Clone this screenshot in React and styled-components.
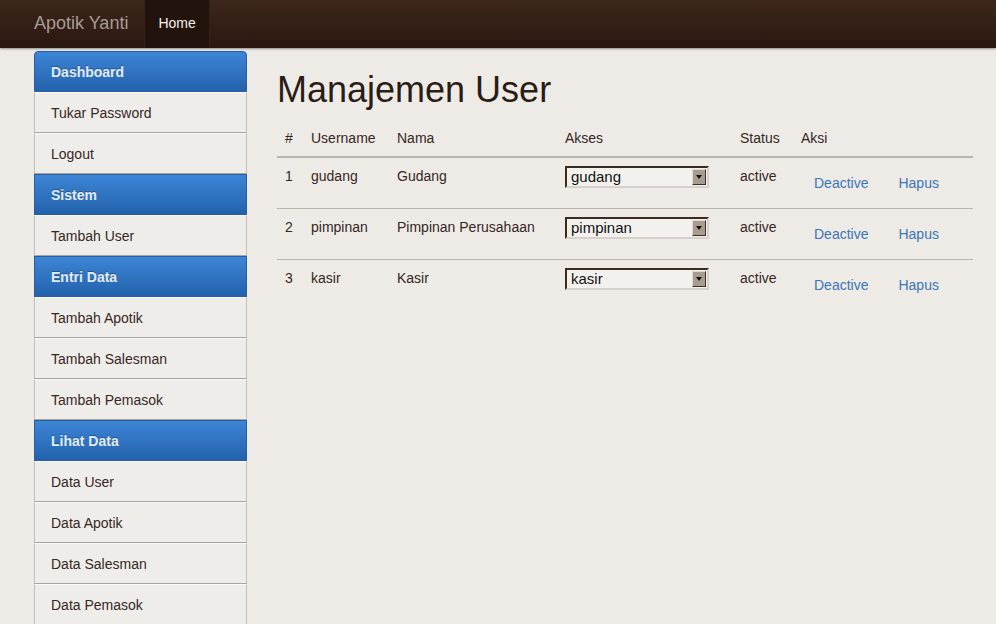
import React from "react";
import styled, { createGlobalStyle } from "styled-components";

const GlobalStyle = createGlobalStyle`
  body {
    margin: 0;
    background: #eeebe7;
    font-family: "Liberation Sans", Arial, sans-serif;
    font-size: 14px;
    color: #34271f;
  }
`;

const Navbar = styled.div`
  height: 48px;
  display: flex;
  align-items: stretch;
  padding-left: 34px;
  background: linear-gradient(#3d271c, #2a170f);
  box-shadow: 0 1px 2px rgba(0, 0, 0, 0.4);
`;

const Brand = styled.div`
  display: flex;
  align-items: center;
  font-size: 18px;
  color: #a69c94;
  margin-right: 16px;
  padding-bottom: 1px;
`;

const NavLink = styled.div`
  display: flex;
  align-items: center;
  padding: 0 14px 2px;
  color: #f4efea;
  font-size: 14px;
  background: #22140d;
  box-shadow: inset 1px 0 0 #33211a, inset -1px 0 0 #33211a;
`;

const Layout = styled.div`
  display: flex;
  padding-left: 34px;
`;

const Sidebar = styled.div`
  width: 213px;
  margin-top: 3px;
  display: flex;
  flex-direction: column;
`;

const NavHeader = styled.div`
  height: 41px;
  box-sizing: border-box;
  padding-left: 16px;
  display: flex;
  align-items: center;
  font-weight: bold;
  color: #e3edf8;
  text-shadow: 0 -1px 0 rgba(0, 0, 0, 0.3);
  background: linear-gradient(#3d85d6, #2362ac);
  border: 1px solid #2a5e9f;
  border-radius: ${(p) => (p.$first ? "4px 4px 0 0" : "0")};
`;

const NavItem = styled.div`
  height: 41px;
  box-sizing: border-box;
  padding-left: 16px;
  display: flex;
  align-items: center;
  color: #36281f;
  background: #efedea;
  border: 1px solid #c3beb9;
  border-top: 1px solid #f9f8f6;
  border-bottom: 1px solid #a9a39e;
`;

const Main = styled.div`
  margin-left: 30px;
  width: 696px;
`;

const Title = styled.h1`
  margin: 22px 0 10px;
  font-size: 36px;
  line-height: 40px;
  font-weight: normal;
  color: #2a1d15;
`;

const Table = styled.table`
  width: 100%;
  border-collapse: collapse;
  table-layout: fixed;
`;

const Th = styled.th`
  text-align: left;
  font-weight: normal;
  padding: 8px;
  line-height: 20px;
  border-bottom: 2px solid #bbb5b0;
  width: ${(p) => (p.$w ? `${p.$w - 16}px` : "auto")};
`;

const Td = styled.td`
  padding: 8px;
  line-height: 20px;
  vertical-align: top;
  white-space: nowrap;
  border-top: 1px solid #bbb5b0;
`;

const Row = styled.tr`
  &:first-child td {
    border-top: none;
  }
`;

const SelectBox = styled.div`
  width: 144px;
  height: 22px;
  box-sizing: border-box;
  display: flex;
  align-items: center;
  justify-content: space-between;
  border: 2px solid;
  border-color: #3a2a20 #d6d1cc #d6d1cc #3a2a20;
  background: #f3f1ee;
  color: #111;
  font-size: 15px;
  padding-left: 4px;
`;

const ArrowBtn = styled.span`
  width: 14px;
  height: 16px;
  margin-right: 1px;
  box-sizing: border-box;
  display: flex;
  align-items: center;
  justify-content: center;
  background: #a89c91;
  border: 1px solid;
  border-color: #e0dad4 #3d3028 #3d3028 #e0dad4;

  &::after {
    content: "";
    border-left: 3px solid transparent;
    border-right: 3px solid transparent;
    border-top: 4px solid #111;
  }
`;

const LinkBtn = styled.span`
  display: inline-block;
  padding: 7px 13px;
  margin-right: 4px;
  color: #3c76b4;
`;

const menu = [
  { head: "Dashboard", items: ["Tukar Password", "Logout"] },
  { head: "Sistem", items: ["Tambah User"] },
  { head: "Entri Data", items: ["Tambah Apotik", "Tambah Salesman", "Tambah Pemasok"] },
  { head: "Lihat Data", items: ["Data User", "Data Apotik", "Data Salesman", "Data Pemasok"] },
];

const users = [
  { id: 1, username: "gudang", nama: "Gudang", akses: "gudang" },
  { id: 2, username: "pimpinan", nama: "Pimpinan Perusahaan", akses: "pimpinan" },
  { id: 3, username: "kasir", nama: "Kasir", akses: "kasir" },
];

export default function App() {
  return (
    <>
      <GlobalStyle />
      <Navbar>
        <Brand>Apotik Yanti</Brand>
        <NavLink>Home</NavLink>
      </Navbar>
      <Layout>
        <Sidebar>
          {menu.map((group, i) => (
            <React.Fragment key={group.head}>
              <NavHeader $first={i === 0}>{group.head}</NavHeader>
              {group.items.map((item) => (
                <NavItem key={item}>{item}</NavItem>
              ))}
            </React.Fragment>
          ))}
        </Sidebar>
        <Main>
          <Title>Manajemen User</Title>
          <Table>
            <thead>
              <tr>
                <Th $w={26}>#</Th>
                <Th $w={86}>Username</Th>
                <Th $w={168}>Nama</Th>
                <Th $w={175}>Akses</Th>
                <Th $w={61}>Status</Th>
                <Th>Aksi</Th>
              </tr>
            </thead>
            <tbody>
              {users.map((u) => (
                <Row key={u.id}>
                  <Td>{u.id}</Td>
                  <Td>{u.username}</Td>
                  <Td>{u.nama}</Td>
                  <Td>
                    <SelectBox>
                      <span>{u.akses}</span>
                      <ArrowBtn />
                    </SelectBox>
                  </Td>
                  <Td>active</Td>
                  <Td>
                    <LinkBtn>Deactive</LinkBtn>
                    <LinkBtn>Hapus</LinkBtn>
                  </Td>
                </Row>
              ))}
            </tbody>
          </Table>
        </Main>
      </Layout>
    </>
  );
}
